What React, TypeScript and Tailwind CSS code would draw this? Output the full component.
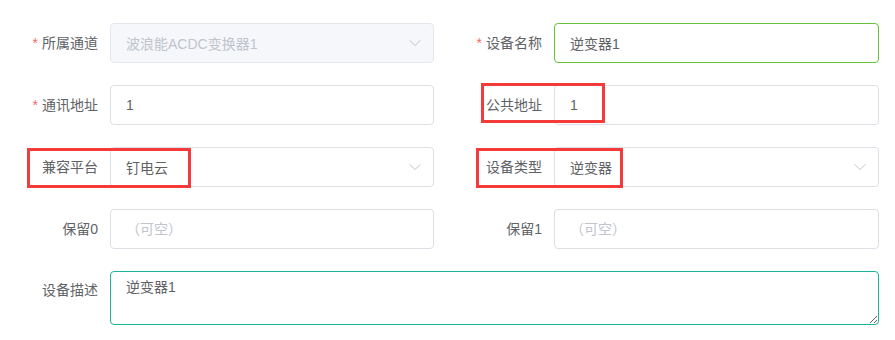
import React from 'react';

const font = { fontFamily: '"Liberation Sans", "Noto Sans CJK SC", sans-serif' };

const Chevron: React.FC = () => (
  <svg className="absolute right-[13px] top-1/2 -translate-y-1/2 h-[7px] w-[12px] text-[#c0c4cc]" viewBox="0 0 12 7" fill="none">
    <path d="M0.5 0.8L6 6L11.5 0.8" stroke="currentColor" strokeWidth="1" />
  </svg>
);

interface FieldProps {
  label: string;
  required?: boolean;
  children: React.ReactNode;
}

const Field: React.FC<FieldProps> = ({ label, required, children }) => (
  <div className="flex items-center h-10">
    <label className="w-[110px] shrink-0 pr-3 text-right text-sm text-[#606266]">
      {required && <span className="text-[#f56c6c] mr-1">*</span>}
      {label}
    </label>
    <div className="relative flex-1 h-10">{children}</div>
  </div>
);

const inputBase =
  'w-full h-10 rounded border px-[15px] text-sm outline-none placeholder:text-[#c0c4cc]';

const App: React.FC = () => {
  return (
    <div className="relative w-[895px] h-[340px] bg-white overflow-hidden" style={font}>
      <div className="pt-[23px]">
        <div className="grid grid-cols-[434px_435px] gap-x-[10px] gap-y-[22px]">
          {/* 所属通道 (disabled select) */}
          <Field label="所属通道" required>
            <input
              className={`${inputBase} border-[#e4e7ed] bg-[#f5f7fa] text-[#c0c4cc]`}
              value="波浪能ACDC变换器1"
              disabled
              readOnly
            />
            <Chevron />
          </Field>

          <Field label="设备名称" required>
            <input className={`${inputBase} border-[#67c23a] text-[#606266]`} value="逆变器1" readOnly />
          </Field>

          <Field label="通讯地址" required>
            <input className={`${inputBase} border-[#dcdfe6] text-[#606266]`} value="1" readOnly />
          </Field>

          <Field label="公共地址">
            <input className={`${inputBase} border-[#dcdfe6] text-[#606266]`} value="1" readOnly />
          </Field>

          <Field label="兼容平台">
            <input className={`${inputBase} border-[#dcdfe6] text-[#606266]`} value="钉电云" readOnly />
            <Chevron />
          </Field>

          <Field label="设备类型">
            <input className={`${inputBase} border-[#dcdfe6] text-[#606266]`} value="逆变器" readOnly />
            <Chevron />
          </Field>

          <Field label="保留0">
            <input className={`${inputBase} border-[#dcdfe6] text-[#606266]`} placeholder="（可空）" />
          </Field>

          <Field label="保留1">
            <input className={`${inputBase} border-[#dcdfe6] text-[#606266]`} placeholder="（可空）" />
          </Field>
        </div>

        {/* 设备描述 */}
        <div className="flex mt-[22px]">
          <label className="w-[110px] shrink-0 pr-3 pt-[9px] text-right text-sm text-[#606266]">设备描述</label>
          <textarea
            className="w-[769px] h-[54px] rounded border border-[#1ab39c] px-[15px] py-[5px] text-sm leading-[1.5] text-[#606266] outline-none"
            defaultValue="逆变器1"
          />
        </div>
      </div>

      {/* annotation boxes */}
      <div className="absolute left-[481px] top-[83px] w-[124px] h-[40px] border-[3px] border-[#f53a3a] pointer-events-none" />
      <div className="absolute left-[27px] top-[148px] w-[164px] h-[40px] border-[3px] border-[#f53a3a] pointer-events-none" />
      <div className="absolute left-[476px] top-[148px] w-[147px] h-[40px] border-[3px] border-[#f53a3a] pointer-events-none" />
    </div>
  );
};

export default App;
